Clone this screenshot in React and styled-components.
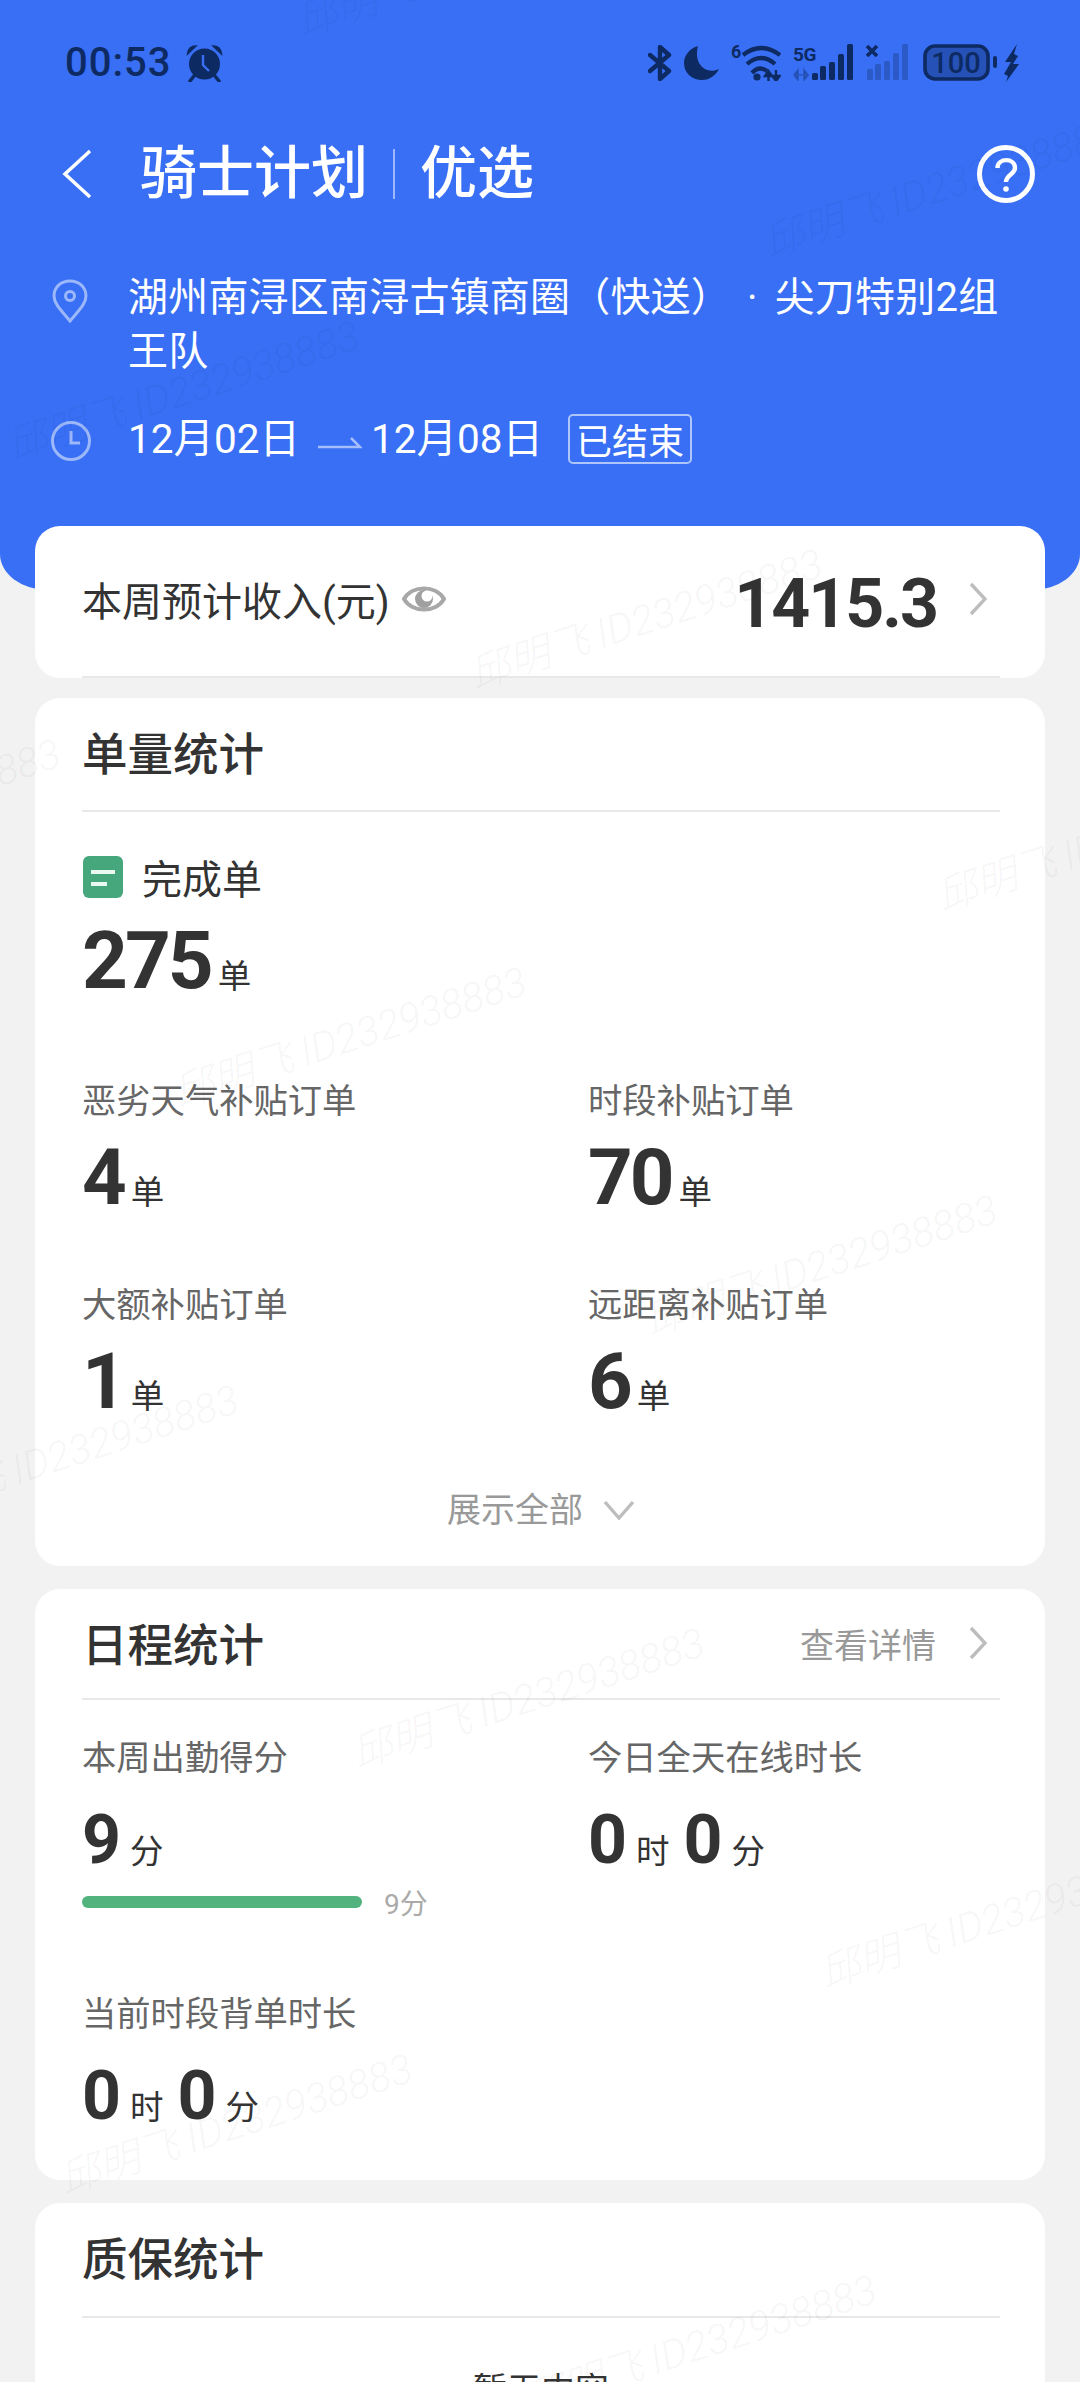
import React from 'react'
import styled, { createGlobalStyle } from 'styled-components'

const GlobalStyle = createGlobalStyle`
  html, body {
    margin: 0;
    padding: 0;
    background: #f2f2f2;
  }
  body {
    font-family: Roboto, "Noto Sans CJK SC", sans-serif;
  }
`

const NAVY = '#0e2a63'

const marks = [
  [305, 45], [772, 266],
  [15, 470], [478, 698], [945, 920],
  [-284, 888], [182, 1116], [653, 1344],
  [-106, 1534], [360, 1777], [828, 1997],
  [68, 2203], [532, 2424],
]

function BackIcon() {
  return (
    <svg width="30" height="50" viewBox="0 0 30 50" fill="none" stroke="#fff" strokeWidth="3.5">
      <path d="M28 2 L3 25 L28 48" />
    </svg>
  )
}

function HelpIcon() {
  return (
    <svg width="58" height="58" viewBox="0 0 58 58" fill="none" stroke="#fff">
      <circle cx="29" cy="29" r="26.5" strokeWidth="5" />
      <path d="M20.5 23 C20.5 12.5 38 12.5 38 23 C38 29.5 29 29.5 29 37" strokeWidth="4.4" />
      <circle cx="29" cy="44" r="2.8" fill="#fff" stroke="none" />
    </svg>
  )
}

function AlarmIcon() {
  return (
    <svg width="37" height="38" viewBox="0 0 37 38">
      <circle cx="18.5" cy="20" r="15.5" fill={NAVY} />
      <path d="M1.5 10 C2 5 5 2 10 2 Z M35.5 10 C35 5 32 2 27 2 Z" fill={NAVY} stroke={NAVY} strokeWidth="1.5" />
      <path d="M8 32 L4 37 M29 32 L33 37" stroke={NAVY} strokeWidth="3.5" strokeLinecap="round" />
      <path d="M17 11 V21 L23 27" stroke="#386ff5" strokeWidth="2.4" fill="none" />
    </svg>
  )
}

function BluetoothIcon() {
  return (
    <svg width="24" height="36" viewBox="0 0 24 36" fill="none" stroke={NAVY} strokeWidth="4.4" strokeLinejoin="round" strokeLinecap="round">
      <path d="M2 10 L21 26 L12 34 V2 L21 10 L2 26" />
    </svg>
  )
}

function MoonIcon() {
  return (
    <svg width="35" height="34" viewBox="0 0 35 34">
      <path d="M14 0 C4 3 0 11 0 17 C0 27 8 34 18 34 C26 34 32 29 35 23 C23 29 9 19 14 0 Z" fill={NAVY} />
    </svg>
  )
}

function WifiIcon() {
  return (
    <svg width="50" height="37" viewBox="0 0 50 37" fill="none" stroke={NAVY} strokeWidth="4.2">
      <text x="0" y="14" fontSize="18" fontWeight="700" fill={NAVY} stroke="none" fontFamily="Roboto">6</text>
      <path d="M12 11 Q30 -3 49 11" />
      <path d="M16 20 Q30 8 44 20" />
      <path d="M21 29 Q28 21 36 27" />
      <circle cx="26" cy="33" r="3.6" fill={NAVY} stroke="none" />
      <path d="M37.5 27 L34 32 H41 Z M37.5 30 V37" fill={NAVY} strokeWidth="2.4" />
      <path d="M45 26 V33 M45 37 L41.5 32 H48.5 Z" fill={NAVY} strokeWidth="2.4" />
    </svg>
  )
}

function MobileSignal() {
  const bars = [[19, 29], [27, 22], [36, 18], [45, 10], [54, 0]]
  return (
    <svg width="60" height="37" viewBox="0 0 60 37">
      <text x="0" y="17" fontSize="19" fontWeight="700" fill={NAVY} fontFamily="Roboto" letterSpacing="-0.5">5G</text>
      <path d="M5 26 L1 31 L5 36 Z M11 26 L15 31 L11 36 Z M5 31 H8 M8 31 H11" fill={NAVY} fillOpacity=".3" stroke={NAVY} strokeOpacity=".3" strokeWidth="2" />
      {bars.map(([x, t]) => (
        <rect key={x} x={x} y={t} width="6" height={36 - t} rx="1.5" fill={NAVY} />
      ))}
    </svg>
  )
}

function NoSignal() {
  const bars = [[2, 25], [10, 20], [19, 17], [28, 9], [37, 0]]
  return (
    <svg width="44" height="37" viewBox="0 0 44 37">
      <path d="M2 2 L12 12 M12 2 L2 12" stroke={NAVY} strokeWidth="3.6" />
      {bars.map(([x, t]) => (
        <rect key={x} x={x} y={t} width="6" height={36 - t} rx="1.5" fill={NAVY} fillOpacity=".32" />
      ))}
    </svg>
  )
}

function BatteryIcon() {
  return (
    <svg width="76" height="37" viewBox="0 0 76 37">
      <rect x="4" y="2" width="63" height="33" rx="10" fill={NAVY} fillOpacity=".42" stroke={NAVY} strokeWidth="3.6" />
      <rect x="72" y="12" width="4" height="12" rx="2" fill={NAVY} />
      <text x="35" y="29" textAnchor="middle" fontSize="29" fontWeight="500" fill={NAVY} fontFamily="Roboto">100</text>
    </svg>
  )
}

function BoltIcon() {
  return (
    <svg width="17" height="38" viewBox="0 0 17 38">
      <path d="M14 0 L2 18 H8 L1 30 L5 32 L3 38 L16 20 H10 L15 12 L11 10 Z" fill={NAVY} />
    </svg>
  )
}

function PinIcon() {
  return (
    <svg width="36" height="44" viewBox="0 0 36 44" fill="none" stroke="#fff" strokeOpacity=".5" strokeWidth="3">
      <path d="M18 42 C10 32 2 25 2 17 C2 8 9 2 18 2 C27 2 34 8 34 17 C34 25 26 32 18 42 Z" />
      <circle cx="18" cy="17" r="4.5" />
    </svg>
  )
}

function ClockIcon() {
  return (
    <svg width="42" height="42" viewBox="0 0 42 42" fill="none" stroke="#fff" strokeOpacity=".5" strokeWidth="3">
      <circle cx="21" cy="21" r="18.5" />
      <path d="M21 11 V23 H30" />
    </svg>
  )
}

function HalfArrow() {
  return (
    <svg width="44" height="14" viewBox="0 0 44 14" fill="none" stroke="#fff" strokeOpacity=".55" strokeWidth="2.5">
      <path d="M0 11 H42 L33 2" />
    </svg>
  )
}

function EyeIcon() {
  return (
    <svg width="44" height="32" viewBox="0 0 44 32">
      <path d="M2 16 C10 2 34 2 42 16 C34 30 10 30 2 16 Z" fill="none" stroke="#a8a8a8" strokeWidth="4" />
      <circle cx="22" cy="16" r="9" fill="#a0a0a0" />
      <circle cx="25" cy="13" r="5.5" fill="#fff" />
    </svg>
  )
}

function ChevronRight() {
  return (
    <svg width="18" height="34" viewBox="0 0 18 34" fill="none" stroke="#bdbdbd" strokeWidth="3.4">
      <path d="M2 2 L16 17 L2 32" />
    </svg>
  )
}

function ChevronDown() {
  return (
    <svg width="32" height="20" viewBox="0 0 32 20" fill="none" stroke="#bdbdbd" strokeWidth="3.4">
      <path d="M2 2 L16 18 L30 2" />
    </svg>
  )
}

function DoneIcon() {
  return (
    <svg width="40" height="42" viewBox="0 0 40 42">
      <rect width="40" height="42" rx="6" fill="#46a67c" />
      <rect x="8" y="14" width="24" height="4" fill="#e9f8f0" />
      <rect x="8" y="26" width="16" height="4" fill="#e9f8f0" />
    </svg>
  )
}

function Value({ parts, $size, $top }) {
  return (
    <ValueRow $top={$top}>
      {parts.map(([num, unit]) => (
        <React.Fragment key={unit + num}>
          <Num $size={$size}>{num}</Num>
          <Unit $size={$size}>{unit}</Unit>
        </React.Fragment>
      ))}
    </ValueRow>
  )
}

function Stat({ label, parts, $size, $top }) {
  return (
    <StatBox>
      <Label>{label}</Label>
      <Value parts={parts} $size={$size} $top={$top} />
    </StatBox>
  )
}

export default function App() {
  return (
    <Page>
      <GlobalStyle />
      <Header>
        <StatusBar>
          <StatusLeft>
            <Time>00:53</Time>
            <AlarmIcon />
          </StatusLeft>
          <StatusRight>
            <BluetoothIcon />
            <MoonIcon />
            <WifiIcon />
            <MobileSignal />
            <NoSignal />
            <BatteryIcon />
            <BoltSlot>
              <BoltIcon />
            </BoltSlot>
          </StatusRight>
        </StatusBar>
        <NavBar>
          <BackIcon />
          <NavTitle>骑士计划</NavTitle>
          <NavDivider />
          <NavTitle $tight>优选</NavTitle>
          <HelpSlot>
            <HelpIcon />
          </HelpSlot>
        </NavBar>
        <InfoRow>
          <InfoIcon>
            <PinIcon />
          </InfoIcon>
          <InfoText>
            湖州南浔区南浔古镇商圈（快送）<Dot>·</Dot>尖刀特别2组王队
          </InfoText>
        </InfoRow>
        <DateRow>
          <InfoIcon>
            <ClockIcon />
          </InfoIcon>
          <DateText>12月02日</DateText>
          <ArrowSlot>
            <HalfArrow />
          </ArrowSlot>
          <DateText>12月08日</DateText>
          <Tag>已结束</Tag>
        </DateRow>
      </Header>

      <Cards>
        <Card $gap={20}>
          <IncomeRow>
            <IncomeLabel>本周预计收入(元)</IncomeLabel>
            <EyeSlot>
              <EyeIcon />
            </EyeSlot>
            <IncomeValue>1415.3</IncomeValue>
            <ChevronRight />
          </IncomeRow>
          <Divider />
        </Card>

        <Card $gap={23}>
          <CardHead $height={112}>
            <CardTitle>单量统计</CardTitle>
          </CardHead>
          <Divider />
          <DoneRow>
            <DoneIcon />
            <DoneLabel>完成单</DoneLabel>
          </DoneRow>
          <Value parts={[['275', '单']]} $size={80} $top={23} />
          <StatGrid>
            <Stat label="恶劣天气补贴订单" parts={[['4', '单']]} $size={78} $top={17} />
            <Stat label="时段补贴订单" parts={[['70', '单']]} $size={78} $top={17} />
            <Stat label="大额补贴订单" parts={[['1', '单']]} $size={78} $top={17} />
            <Stat label="远距离补贴订单" parts={[['6', '单']]} $size={78} $top={17} />
          </StatGrid>
          <ExpandRow>
            <ExpandText>展示全部</ExpandText>
            <ChevronDown />
          </ExpandRow>
        </Card>

        <Card $gap={23}>
          <CardHead $height={109}>
            <CardTitle>日程统计</CardTitle>
            <DetailLink>
              <span>查看详情</span>
              <ChevronRight />
            </DetailLink>
          </CardHead>
          <Divider />
          <ScheduleGrid>
            <StatBox>
              <Label>本周出勤得分</Label>
              <Value parts={[['9', '分']]} $size={68} $top={22} />
              <ProgressRow>
                <ProgressBar />
                <ProgressText>9分</ProgressText>
              </ProgressRow>
            </StatBox>
            <Stat label="今日全天在线时长" parts={[['0', '时'], ['0', '分']]} $size={68} $top={22} />
          </ScheduleGrid>
          <LastStat>
            <Stat label="当前时段背单时长" parts={[['0', '时'], ['0', '分']]} $size={68} $top={22} />
          </LastStat>
        </Card>

        <Card $gap={0}>
          <CardHead $height={113}>
            <CardTitle>质保统计</CardTitle>
          </CardHead>
          <Divider />
          <Empty>暂无内容</Empty>
        </Card>
      </Cards>

      <MarkLayer>
        {marks.map(([x, y]) => (
          <Watermark key={`${x}-${y}`} $x={x} $y={y}>邱明飞 ID232938883</Watermark>
        ))}
      </MarkLayer>
    </Page>
  )
}

const Page = styled.div`
  position: relative;
  width: 1080px;
  height: 2382px;
  overflow: hidden;
  background: #f2f2f2;
  color: #333;
`

const Header = styled.header`
  height: 590px;
  box-sizing: border-box;
  background: #386ff5;
  border-radius: 0 0 48px 48px / 0 0 36px 36px;
  color: #fff;
  padding-top: 44px;
`

const StatusBar = styled.div`
  height: 37px;
  padding: 0 60px 0 65px;
  display: flex;
  justify-content: space-between;
  align-items: center;
`

const StatusLeft = styled.div`
  display: flex;
  align-items: center;
  gap: 15px;
`

const Time = styled.span`
  font-size: 40px;
  font-weight: 500;
  line-height: 37px;
  letter-spacing: 1px;
  color: ${NAVY};
`

const StatusRight = styled.div`
  display: flex;
  align-items: center;
  gap: 12px;
`

const BoltSlot = styled.span`
  margin-left: -6px;
  display: flex;
`

const NavBar = styled.div`
  height: 100px;
  margin-top: 43px;
  padding: 0 45px 0 62px;
  display: flex;
  align-items: center;
`

const NavTitle = styled.h1`
  margin: 0 0 0 ${p => (p.$tight ? 0 : 48)}px;
  font-size: 57px;
  font-weight: 500;
  line-height: 100px;
`

const NavDivider = styled.i`
  width: 2px;
  height: 50px;
  margin: 0 25px;
  background: rgba(255, 255, 255, 0.5);
`

const HelpSlot = styled.div`
  margin-left: auto;
  display: flex;
`

const InfoRow = styled.div`
  margin-top: 47px;
  padding-left: 52px;
  display: flex;
`

const InfoIcon = styled.div`
  width: 76px;
  flex: none;
  margin-top: 8px;
`

const InfoText = styled.div`
  width: 880px;
  font-size: 40px;
  line-height: 54px;
  letter-spacing: 0.2px;
`

const Dot = styled.span`
  margin: 0 17px 0 36px;
`

const DateRow = styled.div`
  margin-top: 35px;
  padding-left: 50px;
  height: 50px;
  display: flex;
  align-items: center;
  ${InfoIcon} {
    width: 78px;
    margin-top: 4px;
    line-height: 0;
  }
`

const DateText = styled.span`
  font-size: 40.5px;
  line-height: 50px;
`

const ArrowSlot = styled.span`
  margin: 8px 9px 0 18px;
  display: flex;
`

const Tag = styled.span`
  margin-left: 25px;
  padding: 0 6px;
  height: 46px;
  display: flex;
  align-items: center;
  border: 2px solid rgba(255, 255, 255, 0.6);
  border-radius: 5px;
  font-size: 36px;
`

const Cards = styled.main`
  position: relative;
  margin-top: -64px;
  padding: 0 35px;
`

const Card = styled.section`
  margin-bottom: ${p => p.$gap}px;
  padding: 0 45px 0 47px;
  background: #fff;
  border-radius: 25px;
`

const Divider = styled.div`
  height: 2px;
  background: #e8e8e8;
`

const IncomeRow = styled.div`
  height: 146px;
  display: flex;
  align-items: center;
  padding-right: 13px;
  margin-bottom: 4px;
`

const IncomeLabel = styled.span`
  font-size: 40px;
  color: #333;
`

const EyeSlot = styled.span`
  margin-left: 12px;
  display: flex;
`

const IncomeValue = styled.span`
  margin: 10px 32px 0 auto;
  font-size: 68px;
  font-weight: 700;
  letter-spacing: -2px;
  color: #333;
`

const CardHead = styled.div`
  height: ${p => p.$height}px;
  padding-right: 13px;
  display: flex;
  justify-content: space-between;
  align-items: flex-start;
`

const CardTitle = styled.h2`
  margin: 0;
  font-size: 45.5px;
  font-weight: 500;
  line-height: 115px;
  color: #333;
`

const DetailLink = styled.div`
  height: 108px;
  display: flex;
  align-items: center;
  gap: 33px;
  font-size: 34px;
  color: #999;
`

const DoneRow = styled.div`
  margin-top: 44px;
  margin-left: 1px;
  height: 42px;
  display: flex;
  align-items: center;
  gap: 19px;
`

const DoneLabel = styled.span`
  font-size: 40px;
  color: #333;
`

const ValueRow = styled.div`
  height: 80px;
  margin-top: ${p => p.$top}px;
  display: flex;
  align-items: baseline;
`

const Num = styled.span`
  font-size: ${p => p.$size}px;
  font-weight: 700;
  line-height: 80px;
  letter-spacing: -3px;
  color: #333;
`

const Unit = styled.span`
  margin-left: ${p => (p.$size > 70 ? 7 : 12)}px;
  margin-right: 14px;
  font-size: 33.5px;
  color: #333;
`

const StatGrid = styled.div`
  margin-top: 80px;
  display: grid;
  grid-template-columns: 506px 1fr;
  grid-auto-rows: 204px;
`

const StatBox = styled.div`
  display: flex;
  flex-direction: column;
`

const Label = styled.div`
  font-size: 34.3px;
  line-height: 40px;
  color: #666;
`

const ExpandRow = styled.div`
  margin-top: -1px;
  padding-bottom: 34px;
  display: flex;
  justify-content: center;
  align-items: center;
  gap: 20px;
`

const ExpandText = styled.span`
  font-size: 34px;
  line-height: 44px;
  color: #999;
`

const ScheduleGrid = styled.div`
  margin-top: 38px;
  display: grid;
  grid-template-columns: 506px 1fr;
`

const ProgressRow = styled.div`
  margin-top: 10px;
  height: 24px;
  display: flex;
  align-items: center;
  gap: 22px;
`

const ProgressBar = styled.div`
  width: 280px;
  height: 12px;
  border-radius: 6px;
  background: #52b37f;
`

const ProgressText = styled.span`
  font-size: 28px;
  color: #aaa;
`

const LastStat = styled.div`
  margin-top: 80px;
  padding-bottom: 44px;
`

const Empty = styled.div`
  margin-top: 50px;
  text-align: center;
  font-size: 34px;
  line-height: 44px;
  color: #333;
  height: 120px;
`

const MarkLayer = styled.div`
  position: absolute;
  inset: 0;
  pointer-events: none;
`

const Watermark = styled.span`
  position: absolute;
  left: ${p => p.$x}px;
  top: ${p => p.$y - 46}px;
  transform: rotate(-18deg);
  transform-origin: left bottom;
  font-size: 41px;
  font-weight: 300;
  line-height: 46px;
  font-style: italic;
  white-space: nowrap;
  color: rgba(0, 0, 0, 0.05);
`
